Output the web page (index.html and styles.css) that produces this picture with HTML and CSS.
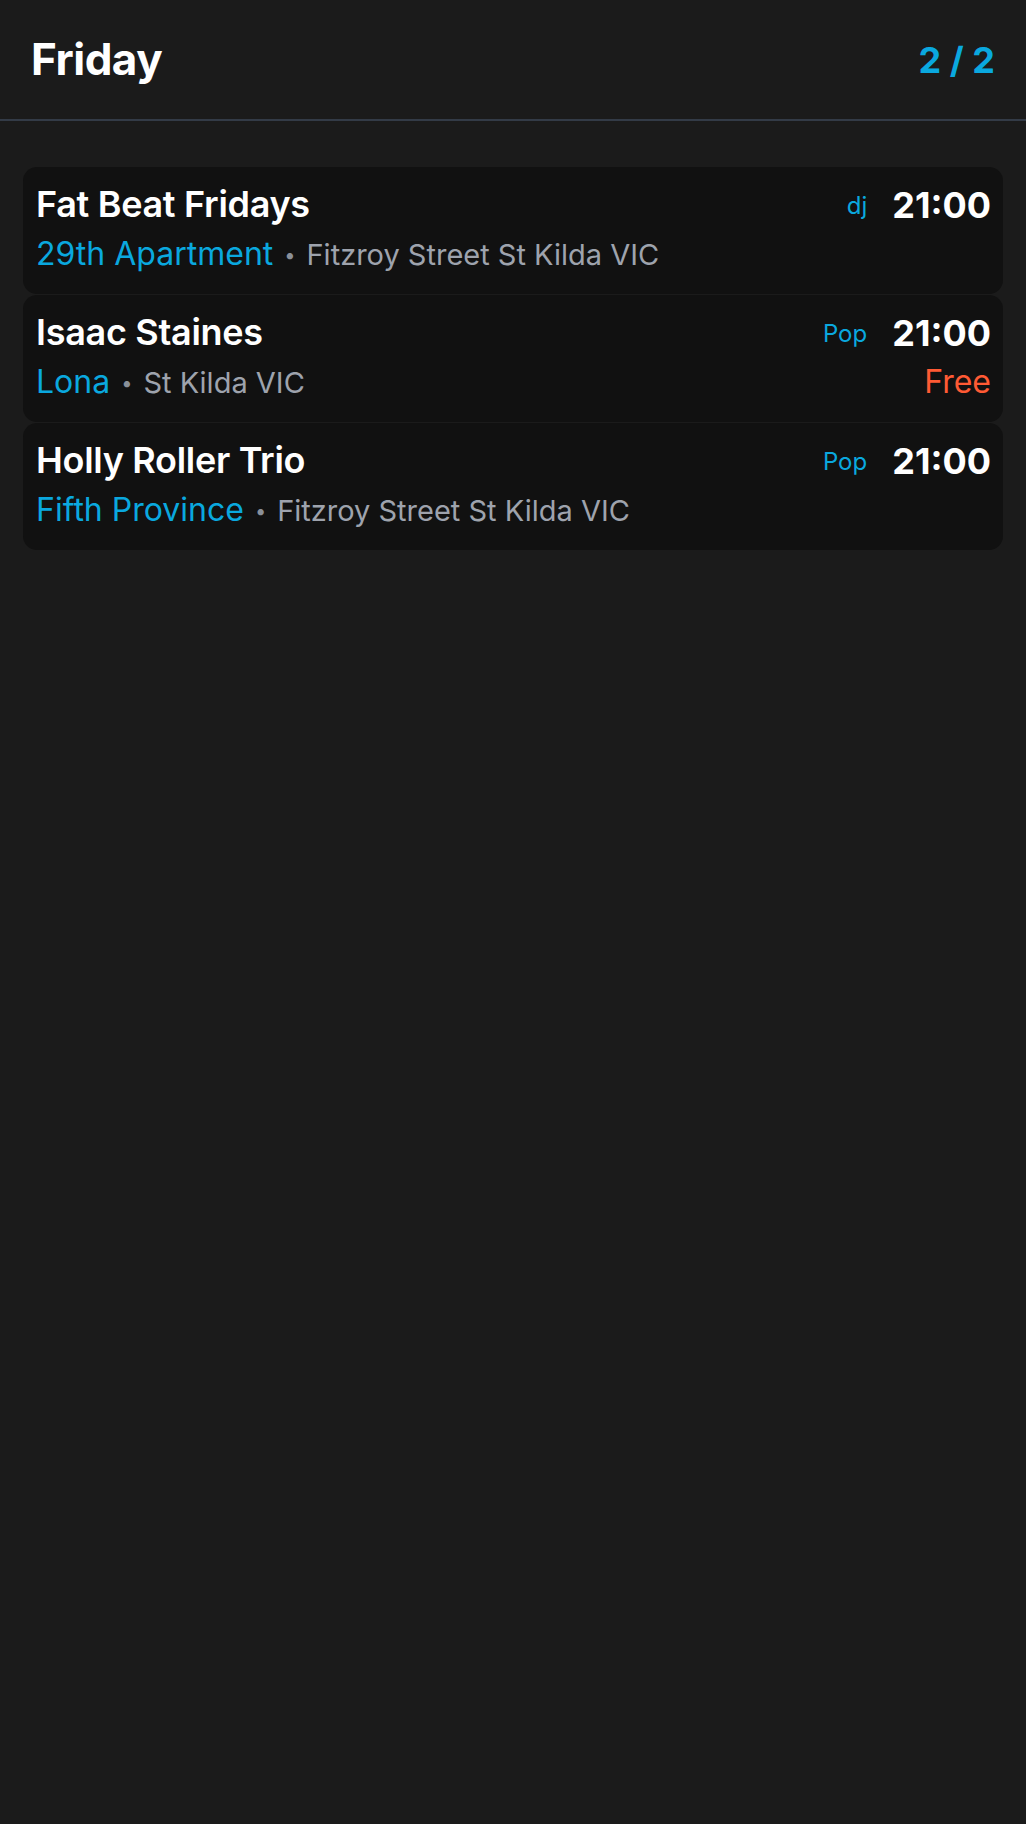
FILE: index.html
```html
<!DOCTYPE html>
<html lang="en">
<head>
<meta charset="utf-8">
<title>Friday</title>
<link rel="stylesheet" href="styles.css">
</head>
<body>
<header class="top">
  <h1 class="day">Friday</h1>
  <div class="pager">2 / 2</div>
</header>
<main class="list">
  <article class="card">
    <div class="title">Fat Beat Fridays</div>
    <div class="right"><span class="tag">dj</span><span class="time">21:00</span></div>
    <div class="sub"><span class="venue">29th Apartment</span><span class="dot">•</span><span class="addr">Fitzroy Street St Kilda VIC</span></div>
    <div class="price"></div>
  </article>
  <article class="card">
    <div class="title">Isaac Staines</div>
    <div class="right"><span class="tag">Pop</span><span class="time">21:00</span></div>
    <div class="sub"><span class="venue">Lona</span><span class="dot">•</span><span class="addr">St Kilda VIC</span></div>
    <div class="price">Free</div>
  </article>
  <article class="card">
    <div class="title">Holly Roller Trio</div>
    <div class="right"><span class="tag">Pop</span><span class="time">21:00</span></div>
    <div class="sub"><span class="venue">Fifth Province</span><span class="dot">•</span><span class="addr">Fitzroy Street St Kilda VIC</span></div>
    <div class="price"></div>
  </article>
</main>
</body>
</html>
```

FILE: styles.css
```css
* { box-sizing: border-box; }
html, body {
  margin: 0;
  background: #1b1b1b;
  font-family: Inter, "Noto Sans", sans-serif;
  color: #ffffff;
}
.top {
  height: 121px;
  display: flex;
  align-items: center;
  justify-content: space-between;
  padding: 0 31px 2px 31px;
  border-bottom: 2px solid #333b47;
}
.day {
  margin: 0;
  font-size: 44px;
  font-weight: 700;
  letter-spacing: -0.5px;
  line-height: 1;
}
.pager {
  font-size: 36px;
  font-weight: 700;
  color: #0aa8df;
  line-height: 1;
  padding-top: 2px;
}
.list {
  padding: 46px 23px;
  display: flex;
  flex-direction: column;
  gap: 1px;
}
.card {
  background: #111111;
  border-radius: 14px;
  padding: 15px 12px 16px 13px;
  display: grid;
  grid-template-columns: 1fr auto;
  column-gap: 16px;
}
.title {
  font-size: 36px;
  font-weight: 600;
  line-height: 44px;
  letter-spacing: -0.3px;
}
.right {
  display: flex;
  align-items: flex-start;
  justify-content: flex-end;
  gap: 25px;
  margin-top: 1px;
}
.tag {
  font-size: 24px;
  line-height: 30px;
  margin-top: 8px;
  color: #0aa8df;
}
.time {
  font-size: 36px;
  line-height: 44px;
  font-weight: 700;
}
.sub {
  margin-top: 7px;
  font-size: 32px;
  line-height: 40px;
  white-space: nowrap;
}
.venue { color: #0aa8df; }
.dot {
  color: #8a9099;
  font-size: 20px;
  margin: 0 11px;
  position: relative;
  top: -3px;
}
.addr { color: #9ea3ad; font-size: 29px; }
.price {
  margin-top: 7px;
  font-size: 32px;
  line-height: 40px;
  color: #ff5a34;
  text-align: right;
}
```
